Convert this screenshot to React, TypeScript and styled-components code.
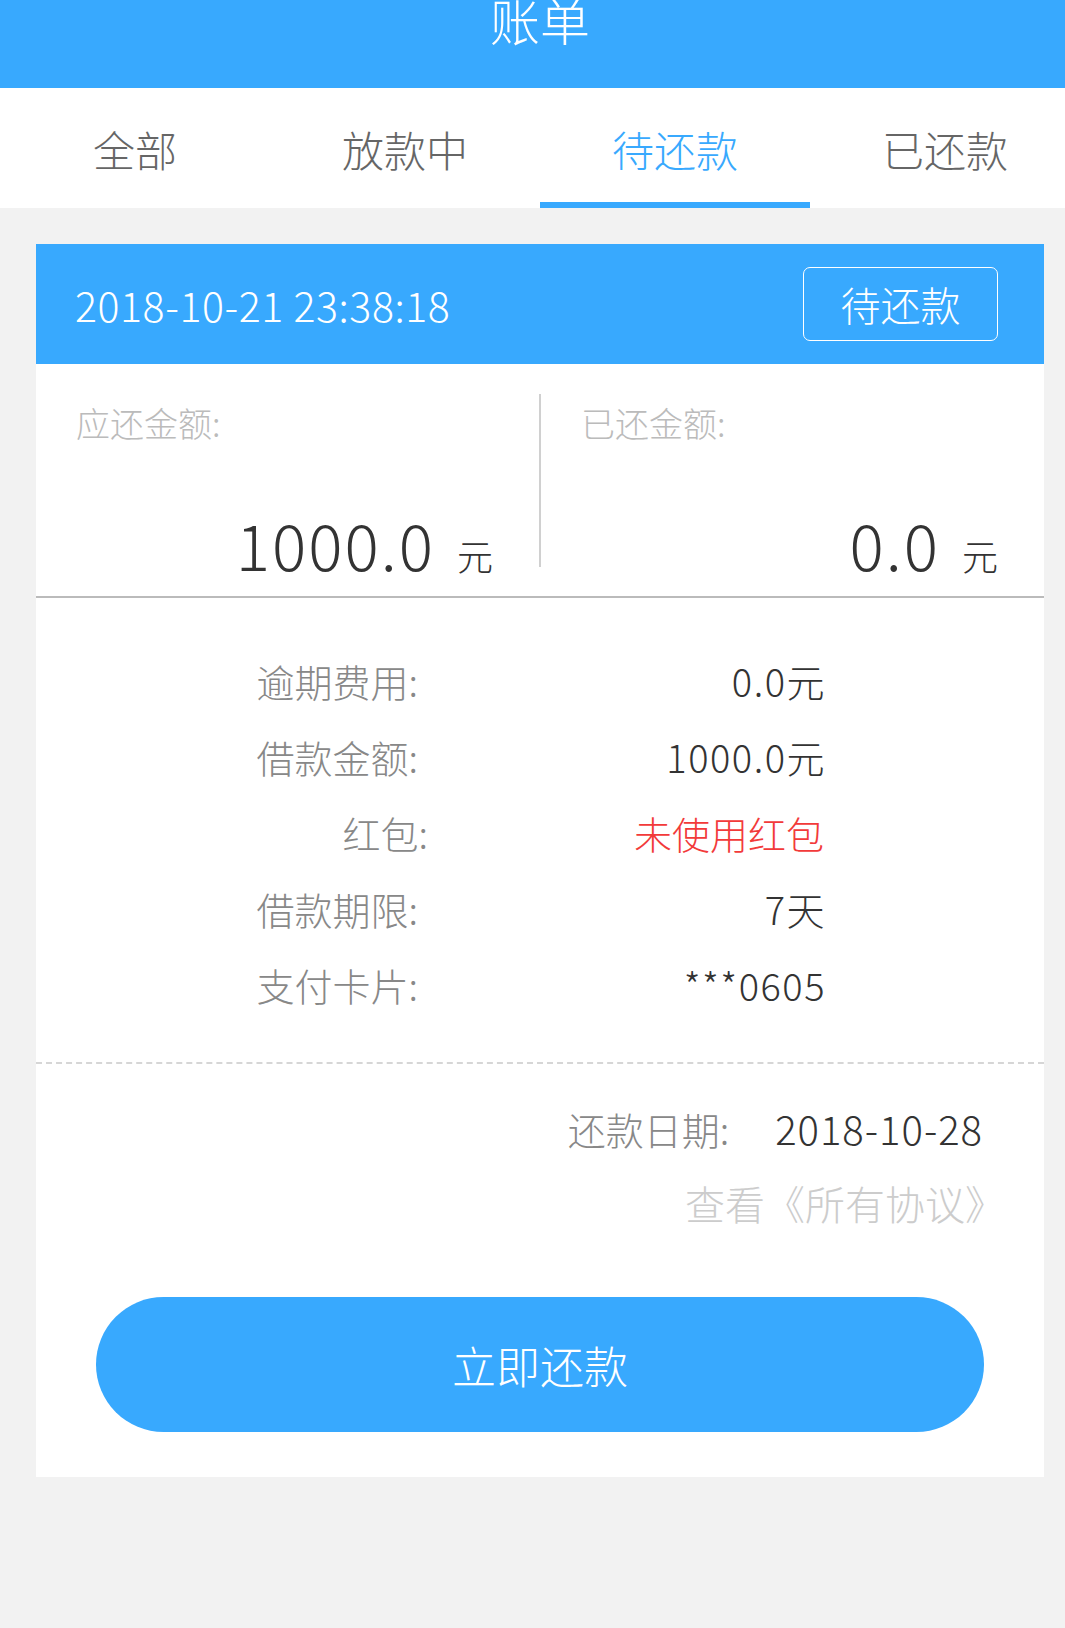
import React from 'react'
import styled, { createGlobalStyle } from 'styled-components'

const BLUE = '#38a9fe'

type Detail = {
  label: string
  value: string
  warn?: boolean
  tight?: boolean
}

const details: Detail[] = [
  { label: '逾期费用:', value: '0.0元' },
  { label: '借款金额:', value: '1000.0元' },
  { label: '红包:', value: '未使用红包', warn: true, tight: true },
  { label: '借款期限:', value: '7天' },
  { label: '支付卡片:', value: '***0605' }
]

const tabs = ['全部', '放款中', '待还款', '已还款']

const App = (): JSX.Element => {
  return (
    <React.Fragment>
      <GlobalStyle />
      <Page>
        <Header>
          <Title>账单</Title>
        </Header>
        <Tabs>
          {tabs.map((tab, i) => (
            <Tab key={tab} $active={i === 2}>
              {tab}
            </Tab>
          ))}
        </Tabs>
        <Card>
          <CardHead>
            <Stamp>2018-10-21 23:38:18</Stamp>
            <Status>待还款</Status>
          </CardHead>
          <Amounts>
            <AmountCol>
              <AmountLabel>应还金额:</AmountLabel>
              <AmountRow>
                <Amount>1000.0</Amount>
                <Unit>元</Unit>
              </AmountRow>
            </AmountCol>
            <Divider />
            <AmountCol>
              <AmountLabel>已还金额:</AmountLabel>
              <AmountRow>
                <Amount>0.0</Amount>
                <Unit>元</Unit>
              </AmountRow>
            </AmountCol>
          </Amounts>
          <Details>
            {details.map((d) => (
              <DetailRow key={d.label}>
                <DetailLabel $tight={d.tight}>{d.label}</DetailLabel>
                <DetailValue $warn={d.warn}>{d.value}</DetailValue>
              </DetailRow>
            ))}
          </Details>
          <Footer>
            <DueRow>
              <DueLabel>还款日期:</DueLabel>
              <DueValue>2018-10-28</DueValue>
            </DueRow>
            <Agreement>查看《所有协议》</Agreement>
            <PayButton>立即还款</PayButton>
          </Footer>
        </Card>
      </Page>
    </React.Fragment>
  )
}

const GlobalStyle = createGlobalStyle`
  html, body {
    margin: 0;
    padding: 0;
    background: #f2f2f2;
    overflow-x: hidden;
  }

  body {
    font-family: 'Noto Sans CJK SC', 'Noto Sans', sans-serif;
    font-weight: 300;
  }
`

const Page = styled.div`
  width: 1080px;
  min-height: 1628px;
  background: #f2f2f2;
`

const Header = styled.div`
  height: 88px;
  background: ${BLUE};
  display: flex;
  justify-content: center;
  align-items: flex-start;
`

const Title = styled.div`
  color: #fff;
  font-size: 50px;
  line-height: 38px;
`

const Tabs = styled.div`
  display: flex;
  background: #fff;
  height: 120px;
`

const Tab = styled.div<{ $active?: boolean }>`
  width: 270px;
  display: flex;
  align-items: center;
  justify-content: center;
  font-size: 42px;
  color: ${(p) => (p.$active ? BLUE : '#666')};
  box-shadow: ${(p) => (p.$active ? `inset 0 -6px 0 ${BLUE}` : 'none')};
`

const Card = styled.div`
  margin: 36px 36px 0;
  background: #fff;
`

const CardHead = styled.div`
  height: 120px;
  background: ${BLUE};
  display: flex;
  align-items: center;
  justify-content: space-between;
  padding: 0 46px 0 39px;
`

const Stamp = styled.div`
  color: #fff;
  font-size: 41px;
  letter-spacing: 0.6px;
`

const Status = styled.div`
  width: 195px;
  height: 74px;
  box-sizing: border-box;
  border: 1.5px solid #fff;
  border-radius: 7px;
  display: flex;
  align-items: center;
  justify-content: center;
  color: #fff;
  font-size: 40px;
`

const Amounts = styled.div`
  display: flex;
  height: 232px;
  border-bottom: 2px solid #bbb;
`

const AmountCol = styled.div`
  flex: 1;
  display: flex;
  flex-direction: column;
  padding: 40px 46px 0 40px;
`

const Divider = styled.div`
  width: 2px;
  height: 173px;
  margin-top: 30px;
  background: #d0d0d0;
`

const AmountLabel = styled.div`
  font-size: 34px;
  line-height: 38px;
  color: #bbb;
`

const AmountRow = styled.div`
  margin-top: 71px;
  display: flex;
  justify-content: flex-end;
  align-items: baseline;
  line-height: 60px;
`

const Amount = styled.span`
  font-size: 64px;
  letter-spacing: 2px;
  color: #333;
`

const Unit = styled.span`
  margin-left: 22px;
  font-size: 36px;
  color: #333;
`

const Details = styled.div`
  padding: 44px 0 40px;
  border-bottom: 2px dashed #d6d6d6;
`

const DetailRow = styled.div`
  display: flex;
  height: 76px;
  align-items: center;
  font-size: 38px;
`

const DetailLabel = styled.div<{ $tight?: boolean }>`
  width: 392px;
  box-sizing: border-box;
  padding-right: ${(p) => (p.$tight ? 0 : 10)}px;
  text-align: right;
  color: #888;
`

const DetailValue = styled.div<{ $warn?: boolean }>`
  width: 400px;
  text-align: right;
  letter-spacing: ${(p) => (p.$warn ? 0 : 1.5)}px;
  padding-right: ${(p) => (p.$warn ? 4 : 2)}px;
  box-sizing: border-box;
  color: ${(p) => (p.$warn ? '#f23a3a' : '#333')};
`

const Footer = styled.div`
  display: flex;
  flex-direction: column;
  padding: 36px 0 45px;
`

const DueRow = styled.div`
  display: flex;
  justify-content: flex-end;
  align-items: baseline;
  gap: 46px;
  padding-right: 61px;
  line-height: 56px;
`

const DueLabel = styled.span`
  font-size: 38px;
  color: #888;
`

const DueValue = styled.span`
  font-size: 40px;
  letter-spacing: 1px;
  color: #333;
`

const Agreement = styled.div`
  margin-top: 18px;
  padding-right: 39px;
  text-align: right;
  font-size: 40px;
  line-height: 56px;
  color: #ccc;
`

const PayButton = styled.button`
  margin: 66px auto 0;
  width: 888px;
  height: 135px;
  border: none;
  border-radius: 68px;
  background: ${BLUE};
  color: #fff;
  font-family: 'Noto Sans CJK SC', 'Noto Sans', sans-serif;
  font-weight: 300;
  font-size: 44px;
  cursor: pointer;
`

export default App
